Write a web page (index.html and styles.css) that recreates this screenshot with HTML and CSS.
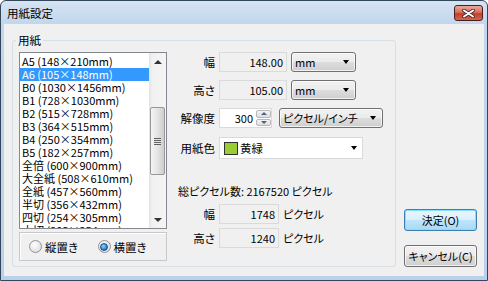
FILE: index.html
```html
<!DOCTYPE html>
<html lang="ja">
  <head>
    <meta charset="utf-8" />
    <title>用紙設定</title>
    <link rel="stylesheet" href="styles.css">
  </head>

  <body>
    <div class="window">
      <div class="titlebar">
        <span class="title">用紙設定</span>
        <button class="close">
          <svg width="13" height="9" viewBox="0 0 13 9">
            <path d="M2 1.5 L11 7.5 M11 1.5 L2 7.5" stroke="#4a2424" stroke-width="3.6" stroke-linecap="round" />
            <path d="M2 1.5 L11 7.5 M11 1.5 L2 7.5" stroke="#fff" stroke-width="2" stroke-linecap="round" />
          </svg>
        </button>
      </div>

      <div class="client">
        <fieldset class="group">
          <legend>用紙</legend>
          <div class="group-body">
            <div class="paper-col">
              <div class="listbox">
                <ul class="items">
                  <li>A5 (148×210mm)</li>
                  <li class="selected">A6 (105×148mm)</li>
                  <li>B0 (1030×1456mm)</li>
                  <li>B1 (728×1030mm)</li>
                  <li>B2 (515×728mm)</li>
                  <li>B3 (364×515mm)</li>
                  <li>B4 (250×354mm)</li>
                  <li>B5 (182×257mm)</li>
                  <li>全倍 (600×900mm)</li>
                  <li>大全紙 (508×610mm)</li>
                  <li>全紙 (457×560mm)</li>
                  <li>半切 (356×432mm)</li>
                  <li>四切 (254×305mm)</li>
                  <li>六切 (203×254mm)</li>
                </ul>
                <div class="scrollbar">
                  <span class="sb-btn"><span class="tri up"></span></span>
                  <span class="sb-track">
                    <span class="thumb"><span class="grip"></span></span>
                  </span>
                  <span class="sb-btn"><span class="tri down"></span></span>
                </div>
              </div>

              <div class="orient">
                <label class="radio"><span class="circle"></span>縦置き</label>
                <label class="radio checked"><span class="circle"></span>横置き</label>
              </div>
            </div>

            <div class="form">
              <div class="row">
                <span class="lbl">幅</span>
                <span class="field ro w68">148.00</span>
                <span class="combo w65 ml4">mm<span class="arrow"></span></span>
              </div>
              <div class="row">
                <span class="lbl">高さ</span>
                <span class="field ro w68">105.00</span>
                <span class="combo w65 ml4">mm<span class="arrow"></span></span>
              </div>
              <div class="row">
                <span class="lbl">解像度</span>
                <span class="spin">
                  <span class="spin-value">300</span>
                  <span class="spin-btns">
                    <span class="spin-btn"><span class="tri up small"></span></span>
                    <span class="spin-btn"><span class="tri down small"></span></span>
                  </span>
                </span>
                <span class="combo w104 ml7">ピクセル/インチ<span class="arrow"></span></span>
              </div>
              <div class="row tall">
                <span class="lbl">用紙色</span>
                <span class="color-combo">
                  <span class="swatch"></span>黄緑<span class="arrow"></span>
                </span>
              </div>

              <div class="total">総ピクセル数: 2167520 ピクセル</div>

              <div class="row first">
                <span class="lbl">幅</span>
                <span class="field ro w60">1748</span>
                <span class="unit">ピクセル</span>
              </div>
              <div class="row near">
                <span class="lbl">高さ</span>
                <span class="field ro w60">1240</span>
                <span class="unit">ピクセル</span>
              </div>
            </div>
          </div>
        </fieldset>

        <div class="buttons">
          <button class="btn default">決定(O)</button>
          <button class="btn">キャンセル(C)</button>
        </div>
      </div>
    </div>
  </body>
</html>
```

FILE: styles.css
```css
* {
  box-sizing: border-box;
  font-feature-settings: "palt";
}

body {
  margin: 0;
  font: 11px/16px "Noto Sans CJK JP", sans-serif;
  color: #000;
}

.window {
  width: 488px;
  height: 281px;
  border: 1px solid #34465a;
  border-radius: 6px 6px 0 0;
  background: linear-gradient(#d6e4f3, #c2d7ed 22px, #b9d1ea);
  padding: 0 3px 4px 3px;
  display: flex;
  flex-direction: column;
}

.titlebar {
  height: 23px;
  display: flex;
  align-items: center;
  justify-content: space-between;
  padding: 0 1px 0 3px;
}

.title {
  font-size: 11.5px;
  line-height: 16px;
}

.close {
  width: 29px;
  height: 16px;
  margin-top: 1px;
  padding: 0;
  border: 1px solid #4b1e1e;
  border-radius: 3px;
  background: linear-gradient(#e8a99c, #d7705d 45%, #c2402c 55%, #d2654f);
  display: flex;
  align-items: center;
  justify-content: center;
}

.client {
  flex: 1;
  background: #f0f0f0;
  display: flex;
  padding: 8px 7px 0 8px;
}

/*=============================================*/

.group {
  margin: 0;
  width: 384px;
  height: 235px;
  padding: 4px 0 0 6px;
  border: 1px solid #d5dfe5;
  border-radius: 3px;
}

.group legend {
  padding: 0 2px;
  margin-left: -3px;
  font-size: 11.5px;
  line-height: 16px;
}

.group-body {
  display: flex;
  gap: 12px;
}

.paper-col {
  width: 148px;
}

.listbox {
  width: 148px;
  height: 177px;
  border: 1px solid #828790;
  background: #fff;
  display: flex;
  overflow: hidden;
}

.items {
  list-style: none;
  margin: 0;
  padding: 2px 0 0 0;
  flex: 1;
  overflow: hidden;
  font-size: 11px;
}

.items li {
  height: 13px;
  line-height: 13px;
  padding-left: 2px;
  white-space: nowrap;
}

.items li.selected {
  background: #3399ff;
  color: #fff;
}

.scrollbar {
  width: 17px;
  display: flex;
  flex-direction: column;
  background: linear-gradient(to right, #e3e3e3, #f0f0f0 3px, #f5f5f5);
}

.sb-btn {
  height: 17px;
  display: flex;
  align-items: center;
  justify-content: center;
}

.sb-track {
  flex: 1;
}

.thumb {
  display: flex;
  align-items: center;
  justify-content: center;
  width: 15px;
  height: 68px;
  margin: 37px 0 0 1px;
  border: 1px solid #979797;
  border-radius: 2px;
  background: linear-gradient(to right, #f4f4f4, #e4e4e4 50%, #cdcdcd);
}

.grip {
  width: 7px;
  height: 7px;
  background: repeating-linear-gradient(#5f5f5f 0 1px, #e8e8e8 1px 2px);
}

.tri {
  width: 0;
  height: 0;
  border-left: 4px solid transparent;
  border-right: 4px solid transparent;
}

.tri.up {
  border-bottom: 4px solid #333;
}

.tri.down {
  border-top: 4px solid #333;
}

.tri.small {
  border-left-width: 3px;
  border-right-width: 3px;
}

.tri.small.up {
  border-bottom: 3px solid #4d6185;
}

.tri.small.down {
  border-top: 3px solid #4d6185;
}

.orient {
  margin-top: 3px;
  height: 29px;
  border: 1px solid #c8c8c8;
  box-shadow: inset 1px 1px #fff;
  display: flex;
  align-items: center;
  padding-left: 9px;
}

.radio {
  display: flex;
  align-items: center;
  gap: 3px;
  width: 69px;
  font-size: 11.5px;
}

.circle {
  width: 13px;
  height: 13px;
  border: 1px solid #939393;
  border-radius: 50%;
  background: radial-gradient(circle at 40% 35%, #ffffff, #e2e2e2 70%, #d0d0d0);
  display: flex;
  align-items: center;
  justify-content: center;
}

.radio.checked .circle::after {
  content: "";
  width: 6px;
  height: 6px;
  border-radius: 50%;
  background: radial-gradient(circle at 40% 35%, #8ad6ff, #1b74c9 75%);
  border: 1px solid #1c4f86;
}

/*=============================================*/

.form {
  width: 210px;
}

.row {
  display: flex;
  align-items: center;
  height: 20px;
}

.row + .row {
  margin-top: 8px;
}

.row.tall {
  height: 22px;
  margin-top: 9px;
}

.row.first {
  margin-top: 5px;
}

.row.near {
  margin-top: 4px;
}

.lbl {
  width: 36px;
  margin-right: 4px;
  text-align: right;
  font-size: 11.5px;
}

.field {
  height: 20px;
  line-height: 18px;
  padding-right: 3px;
  text-align: right;
  border: 1px solid #dadada;
  background: #f0f0f0;
}

.w68 {
  width: 68px;
}

.w60 {
  width: 60px;
}

.w65 {
  width: 65px;
}

.w104 {
  width: 104px;
}

.ml4 {
  margin-left: 4px;
}

.ml7 {
  margin-left: 7px;
}

.combo {
  position: relative;
  height: 20px;
  line-height: 18px;
  padding-left: 3px;
  border: 1px solid #707070;
  border-radius: 3px;
  background: linear-gradient(#f2f2f2, #ebebeb 50%, #dddddd 50%, #cfcfcf);
  box-shadow: inset 0 0 0 1px rgba(255, 255, 255, 0.7);
  white-space: nowrap;
}

.arrow {
  position: absolute;
  right: 6px;
  top: 50%;
  margin-top: -2px;
  width: 0;
  height: 0;
  border-left: 3.5px solid transparent;
  border-right: 3.5px solid transparent;
  border-top: 4px solid #000;
}

.spin {
  width: 53px;
  height: 20px;
  border: 1px solid #dadada;
  background: #fff;
  display: flex;
}

.spin-value {
  flex: 1;
  text-align: right;
  line-height: 18px;
  padding-right: 3px;
}

.spin-btns {
  width: 15px;
  display: flex;
  flex-direction: column;
  padding: 1px 0;
  gap: 1px;
}

.spin-btn {
  flex: 1;
  display: flex;
  align-items: center;
  justify-content: center;
  border: 1px solid #b9b9b9;
  border-radius: 2px;
  background: linear-gradient(#f4f4f4, #dedede);
}

.color-combo {
  position: relative;
  width: 144px;
  height: 22px;
  border: 1px solid #dadada;
  background: #fff;
  display: flex;
  align-items: center;
  padding-left: 4px;
  gap: 2px;
  font-size: 11.5px;
}

.color-combo .arrow {
  right: 5px;
}

.swatch {
  width: 14px;
  height: 13px;
  border: 1px solid #303030;
  background: #9acd32;
}

.total {
  margin-top: 24px;
  margin-left: -1px;
  white-space: nowrap;
}

.unit {
  margin-left: 4px;
}

/*=============================================*/

.buttons {
  margin-left: 8px;
  display: flex;
  flex-direction: column;
  justify-content: flex-end;
  gap: 14px;
  padding-bottom: 9px;
}

.btn {
  width: 73px;
  height: 22px;
  padding: 0;
  font: inherit;
  font-feature-settings: "palt";
  color: #000;
  white-space: nowrap;
  border: 1px solid #707070;
  border-radius: 3px;
  background: linear-gradient(#f2f2f2, #ebebeb 50%, #dddddd 50%, #cfcfcf);
  box-shadow: inset 0 0 0 1px rgba(255, 255, 255, 0.7);
}

.btn.default {
  border-color: #3c7fb1;
  background: linear-gradient(#eaf6fd, #d9f0fc 50%, #bee6fd 50%, #a7d9f5);
  box-shadow: inset 0 0 0 1px #7fe0ff;
}
```
